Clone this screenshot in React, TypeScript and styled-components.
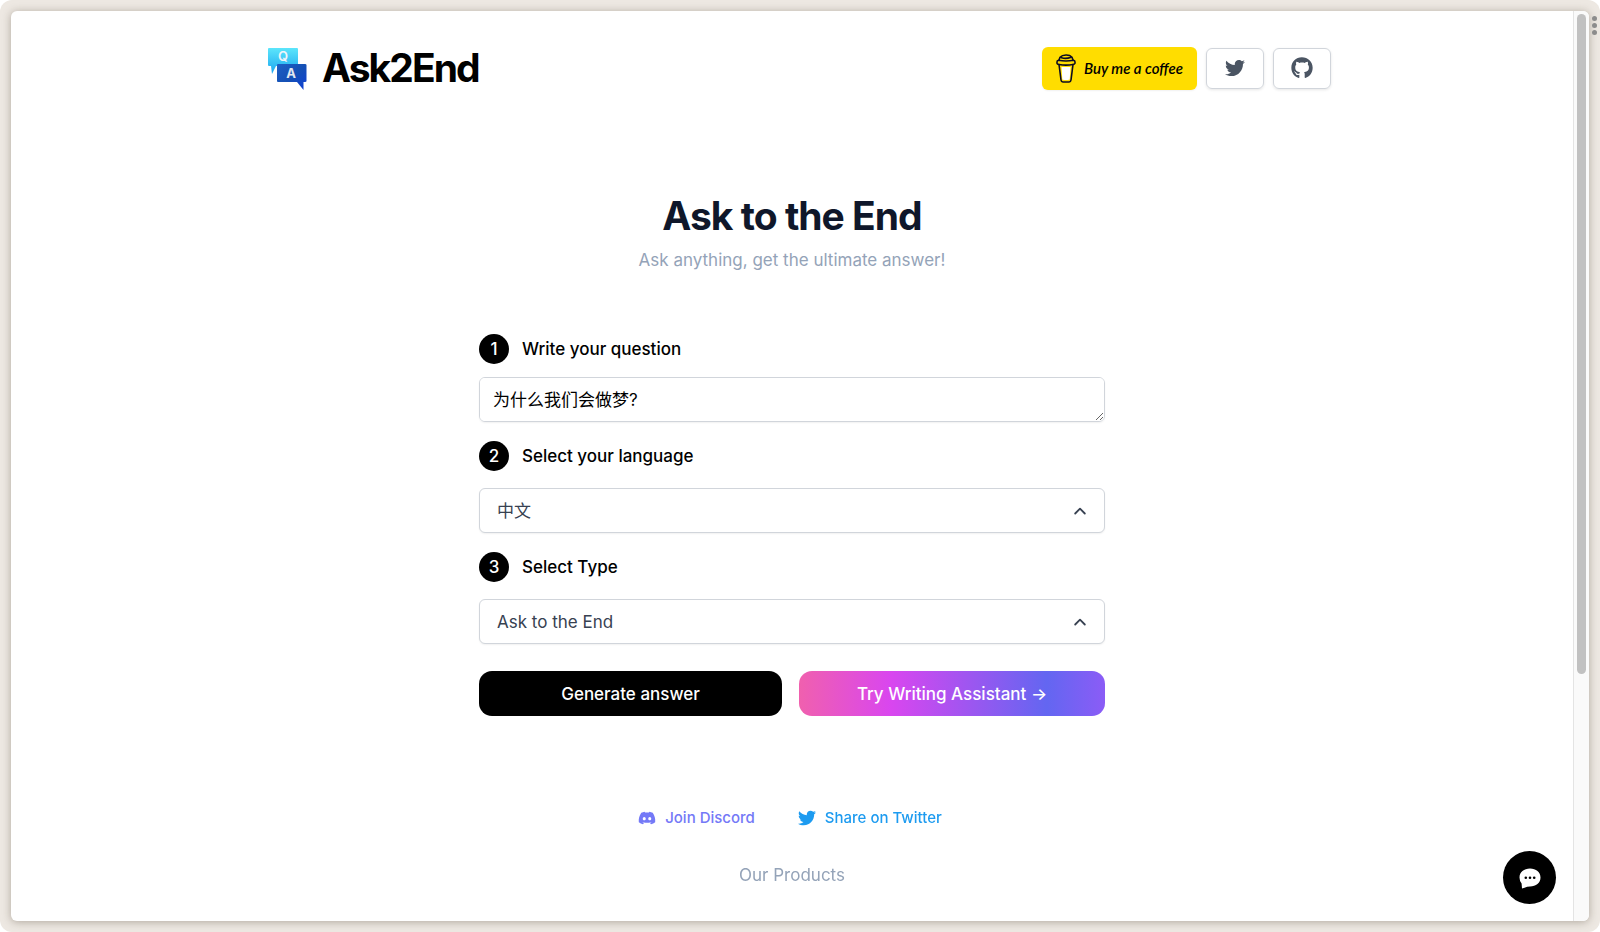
import React from 'react';
import styled, { createGlobalStyle } from 'styled-components';
import { FaTwitter, FaGithub, FaDiscord } from 'react-icons/fa';

const GlobalStyle = createGlobalStyle`
  *, *::before, *::after { box-sizing: border-box; }
  body { margin: 0; background: #fff; font-family: Inter, 'Noto Sans CJK SC', sans-serif; color: #000; }
  h1, h2, p { margin: 0; }
  button, select, textarea { font-family: inherit; margin: 0; }
  a { color: inherit; text-decoration: none; }
`;

const Frame = styled.div`
  position: relative;
  display: flex;
  min-height: 100vh;
  padding: 11px;
  background: #ede8e2;
  border-radius: 12px;
`;

const Viewport = styled.div`
  position: relative;
  display: flex;
  flex: 1;
  background: #fff;
  border-radius: 6px;
  overflow: hidden;
  box-shadow: 0 1px 8px rgba(60, 45, 30, 0.35);
`;

const Page = styled.div`
  flex: 1;
  display: flex;
  flex-direction: column;
  align-items: center;
`;

const ScrollTrack = styled.div`
  width: 16px;
  padding: 3px;
  background: #fafafa;
  border-left: 1px solid #e4e4e4;
`;

const ScrollThumb = styled.div`
  width: 9px;
  height: 73%;
  border-radius: 5px;
  background: #c1c1c1;
`;

const MenuDots = styled.div`
  position: absolute;
  top: 16px;
  right: 3px;
  display: grid;
  gap: 2px;
`;

const Dot = styled.span`
  width: 5px;
  height: 5px;
  border-radius: 50%;
  background: #8c8c8c;
`;

const Header = styled.header`
  display: flex;
  align-items: center;
  justify-content: space-between;
  width: 100%;
  max-width: 1078px;
  padding: 35px 0 0 14px;
`;

const Brand = styled.a`
  display: flex;
  align-items: center;
  gap: 14px;
`;

const BrandName = styled.h2`
  font-size: 39px;
  line-height: 44px;
  font-weight: 700;
  letter-spacing: -0.05em;
`;

const Actions = styled.nav`
  display: flex;
  align-items: center;
  gap: 9px;
`;

const Coffee = styled.a`
  display: flex;
  align-items: center;
  gap: 8px;
  width: 155px;
  height: 43px;
  padding-left: 14px;
  border-radius: 6px;
  background: #ffdd00;
  font: italic 600 15px/20px Lato, cursive;
  white-space: nowrap;
  box-shadow: 0 1px 2px rgba(0, 0, 0, 0.06);
`;

const IconLink = styled.a`
  display: flex;
  align-items: center;
  justify-content: center;
  width: 58px;
  height: 41px;
  border: 1px solid #d1d5db;
  border-radius: 6px;
  color: #4b5563;
  box-shadow: 0 1px 3px rgba(0, 0, 0, 0.1);
`;

const Main = styled.main`
  display: flex;
  flex-direction: column;
  width: 100%;
  max-width: 626px;
  padding-top: 100px;
`;

const Title = styled.h1`
  color: #0f172a;
  font-size: 39px;
  line-height: 52px;
  font-weight: 700;
  letter-spacing: -0.025em;
  text-align: center;
`;

const Subtitle = styled.p`
  padding-top: 4px;
  color: #94a3b8;
  font-size: 17px;
  line-height: 28px;
  text-align: center;
`;

const Form = styled.form`
  display: flex;
  flex-direction: column;
  padding-top: 60px;
`;

const Step = styled.label`
  display: flex;
  align-items: center;
  gap: 13px;
  font-size: 17px;
  line-height: 30px;
  font-weight: 500;
`;

const StepNumber = styled.span`
  width: 30px;
  height: 30px;
  border-radius: 50%;
  background: #000;
  color: #fff;
  text-align: center;
`;

const Question = styled.textarea`
  display: block;
  width: 100%;
  height: 45px;
  margin: 13px 0 19px;
  padding: 9px 13px;
  border: 1px solid #d1d5db;
  border-radius: 6px;
  background: #fff;
  color: #000;
  font-size: 17px;
  line-height: 26px;
  resize: vertical;
  box-shadow: 0 1px 2px rgba(0, 0, 0, 0.06);
`;

const SelectBox = styled.div<{ $after: number }>`
  display: grid;
  align-items: center;
  margin: 17px 0 ${p => p.$after}px;
  > * { grid-area: 1 / 1; }
`;

const Select = styled.select`
  appearance: none;
  width: 100%;
  height: 45px;
  padding: 0 17px;
  border: 1px solid #d1d5db;
  border-radius: 6px;
  background: #fff;
  color: #374151;
  font-size: 17px;
  line-height: 26px;
  box-shadow: 0 1px 2px rgba(0, 0, 0, 0.06);
`;

const Chevron = styled.svg`
  justify-self: end;
  margin-right: 19px;
  pointer-events: none;
`;

const ButtonRow = styled.div`
  display: grid;
  grid-template-columns: 303fr 306fr;
  gap: 17px;
`;

const ActionButton = styled.button<{ $fill: string }>`
  height: 45px;
  border: 0;
  border-radius: 13px;
  background: ${p => p.$fill};
  color: #fff;
  font-size: 17px;
  line-height: 26px;
  font-weight: 500;
`;

const Footer = styled.footer`
  display: flex;
  flex-direction: column;
  align-items: center;
  gap: 30px;
  padding: 89px 0 32px;
`;

const Links = styled.div`
  display: flex;
  gap: 43px;
  padding-right: 4px;
`;

const SocialLink = styled.a<{ $color: string }>`
  display: flex;
  align-items: center;
  gap: 9px;
  color: ${p => p.$color};
  font-size: 15px;
  line-height: 26px;
  font-weight: 500;
`;

const Products = styled.p`
  color: #94a3b8;
  font-size: 17px;
  line-height: 28px;
`;

const ChatButton = styled.button`
  position: absolute;
  right: 33px;
  bottom: 17px;
  display: grid;
  place-items: center;
  width: 53px;
  height: 53px;
  padding: 0;
  border: 0;
  border-radius: 50%;
  background: #000;
`;

const BrandLogo = () => (
  <svg width="41" height="44" viewBox="0 0 41 44" aria-hidden="true">
    <defs>
      <linearGradient id="light" x1="0" y1="0" x2="0" y2="1">
        <stop offset="0" stopColor="#5ce6fb" />
        <stop offset="1" stopColor="#1ba5f0" />
      </linearGradient>
      <linearGradient id="dark" x1="0" y1="0" x2="1" y2="1">
        <stop offset="0" stopColor="#1c5fc4" />
        <stop offset="0.5" stopColor="#1550b5" />
        <stop offset="1" stopColor="#0f3fd6" />
      </linearGradient>
    </defs>
    <path d="M2 2H30Q31 2 31 3V20H9L5 28 4 20H2Q1 20 1 19V3Q1 2 2 2Z" fill="url(#light)" />
    <path d="M11 18H38Q39.500 18 39.500 19V35Q39.500 36 38 36H36.500V44L30 36H11Q10 36 10 35V19Q10 18 11 18Z" fill="url(#dark)" />
    <text x="16" y="15" fontSize="13" fontWeight="600" textAnchor="middle" fill="#f1f5f9" fontFamily="Inter, sans-serif">Q</text>
    <text x="24" y="32" fontSize="13" fontWeight="700" textAnchor="middle" fill="#e2e8f0" fontFamily="Inter, sans-serif">A</text>
  </svg>
);

const CoffeeCup = () => (
  <svg width="20" height="29" viewBox="0 0 20 29" fill="none" stroke="#0d0c22" strokeWidth="1.6" strokeLinejoin="round" strokeLinecap="round" aria-hidden="true">
    <path d="M5.5 13H14.500L13.700 25.500Q10 26.500 6.300 25.500Z" fill="#fff" stroke="none" />
    <path d="M3 10.500L5 26Q5.200 27.800 7 28H13Q14.800 27.800 15 26L17 10.500" />
    <path d="M1 8Q1 6.500 2.500 6.300Q10 7.600 17.500 6.300Q19 6.500 19 8V9.300Q18.500 10.500 17 10.500Q10 11.800 3 10.500Q1.200 10.300 1 9.300Z" />
    <path d="M3 6L4 3.200Q6 1.100 10 1T16 3.200L17 6M5.500 3.800Q10 5 14.500 3.500" />
  </svg>
);

const ChevronUp = () => (
  <Chevron width="12" height="8" viewBox="0 0 12 8" fill="none" stroke="#374151" strokeWidth="1.800" strokeLinecap="round" strokeLinejoin="round" aria-hidden="true">
    <path d="M1.200 6.500L6 1.700 10.800 6.500" />
  </Chevron>
);

const ChatBubble = () => (
  <svg width="22" height="22" viewBox="0 0 22 22" aria-hidden="true">
    <path d="M11 1.500C17 1.500 21.500 5.200 21.500 10.500S17 19.500 11 19.500Q9.500 19.500 8.200 19.700Q5.500 21 3 21.500L2.600 16.500Q.5 14 .5 10.500C.5 5.200 5 1.500 11 1.500Z" fill="#fff" />
    <circle cx="6.800" cy="10.800" r="1.300" />
    <circle cx="11" cy="10.800" r="1.300" />
    <circle cx="15.200" cy="10.800" r="1.300" />
  </svg>
);

export default function App() {
  return (
    <Frame>
      <GlobalStyle />
      <Viewport>
        <Page>
          <Header>
            <Brand href="#">
              <BrandLogo />
              <BrandName>Ask2End</BrandName>
            </Brand>
            <Actions>
              <Coffee href="#"><CoffeeCup />Buy me a coffee</Coffee>
              <IconLink href="#" aria-label="Twitter"><FaTwitter size={20} /></IconLink>
              <IconLink href="#" aria-label="GitHub"><FaGithub size={22} /></IconLink>
            </Actions>
          </Header>
          <Main>
            <Title>Ask to the End</Title>
            <Subtitle>Ask anything, get the ultimate answer!</Subtitle>
            <Form onSubmit={e => e.preventDefault()}>
              <Step htmlFor="question"><StepNumber>1</StepNumber>Write your question</Step>
              <Question id="question" rows={1} defaultValue="为什么我们会做梦?" />
              <Step htmlFor="language"><StepNumber>2</StepNumber>Select your language</Step>
              <SelectBox $after={19}>
                <Select id="language"><option>中文</option></Select>
                <ChevronUp />
              </SelectBox>
              <Step htmlFor="type"><StepNumber>3</StepNumber>Select Type</Step>
              <SelectBox $after={27}>
                <Select id="type"><option>Ask to the End</option></Select>
                <ChevronUp />
              </SelectBox>
              <ButtonRow>
                <ActionButton type="submit" $fill="#000">Generate answer</ActionButton>
                <ActionButton type="button" $fill="linear-gradient(90deg, #f060ae 0%, #d946ef 30%, #6366f1 81%, #8b5cf6 100%)">Try Writing Assistant →</ActionButton>
              </ButtonRow>
            </Form>
          </Main>
          <Footer>
            <Links>
              <SocialLink href="#" $color="#7479f7"><FaDiscord size={18} />Join Discord</SocialLink>
              <SocialLink href="#" $color="#1d9bf0"><FaTwitter size={18} />Share on Twitter</SocialLink>
            </Links>
            <Products>Our Products</Products>
          </Footer>
        </Page>
        <ScrollTrack><ScrollThumb /></ScrollTrack>
        <ChatButton type="button" aria-label="Open chat"><ChatBubble /></ChatButton>
      </Viewport>
      <MenuDots><Dot /><Dot /><Dot /></MenuDots>
    </Frame>
  );
}
